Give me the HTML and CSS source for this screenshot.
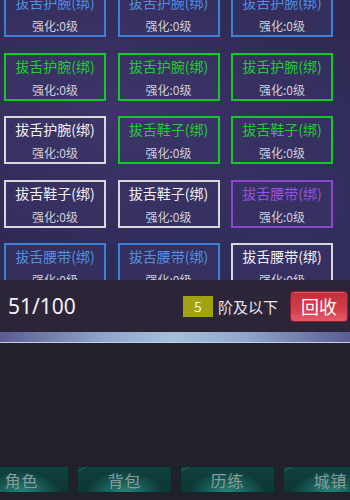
FILE: index.html
```html
<!DOCTYPE html>
<html>
<head>
<meta charset="utf-8">
<link rel="stylesheet" href="styles.css">
</head>
<body>
<div class="app">
  <div class="bag">
    <div class="grid">
      <div class="card blue"><div class="name">拔舌护腕(绑)</div><div class="lv">强化:0级</div></div>
      <div class="card blue"><div class="name">拔舌护腕(绑)</div><div class="lv">强化:0级</div></div>
      <div class="card blue"><div class="name">拔舌护腕(绑)</div><div class="lv">强化:0级</div></div>
      <div class="card green"><div class="name">拔舌护腕(绑)</div><div class="lv">强化:0级</div></div>
      <div class="card green"><div class="name">拔舌护腕(绑)</div><div class="lv">强化:0级</div></div>
      <div class="card green"><div class="name">拔舌护腕(绑)</div><div class="lv">强化:0级</div></div>
      <div class="card white"><div class="name">拔舌护腕(绑)</div><div class="lv">强化:0级</div></div>
      <div class="card green"><div class="name">拔舌鞋子(绑)</div><div class="lv">强化:0级</div></div>
      <div class="card green"><div class="name">拔舌鞋子(绑)</div><div class="lv">强化:0级</div></div>
      <div class="card white"><div class="name">拔舌鞋子(绑)</div><div class="lv">强化:0级</div></div>
      <div class="card white"><div class="name">拔舌鞋子(绑)</div><div class="lv">强化:0级</div></div>
      <div class="card purple"><div class="name">拔舌腰带(绑)</div><div class="lv">强化:0级</div></div>
      <div class="card blue"><div class="name">拔舌腰带(绑)</div><div class="lv">强化:0级</div></div>
      <div class="card blue"><div class="name">拔舌腰带(绑)</div><div class="lv">强化:0级</div></div>
      <div class="card white"><div class="name">拔舌腰带(绑)</div><div class="lv">强化:0级</div></div>
    </div>
  </div>
  <div class="panel">
    <div class="count">51/100</div>
    <div class="filter">
      <span class="tier">5</span>
      <span class="tier-label">阶及以下</span>
      <button class="recycle">回收</button>
    </div>
  </div>
  <div class="band"></div>
  <div class="empty"></div>
  <nav class="nav">
    <div class="tab"><span>角色</span></div>
    <div class="tab"><span>背包</span></div>
    <div class="tab"><span>历练</span></div>
    <div class="tab"><span>城镇</span></div>
  </nav>
</div>
</body>
</html>
```
FILE: styles.css
```css
* { box-sizing: border-box; margin: 0; padding: 0; }
html, body { width: 350px; height: 500px; overflow: hidden; background: #222129; }
body { font-family: "Noto Sans CJK SC", "Noto Sans", sans-serif; }
.app { width: 350px; height: 500px; display: flex; flex-direction: column; }

.bag {
  height: 280px;
  overflow: hidden;
  background:
    radial-gradient(ellipse at 30% 40%, rgba(90, 70, 140, 0.35), transparent 60%),
    radial-gradient(ellipse at 80% 70%, rgba(60, 60, 120, 0.3), transparent 60%),
    #2f2a55;
}
.grid {
  margin-top: -11px;
  padding-left: 4px;
  display: grid;
  grid-template-columns: repeat(3, 102px);
  column-gap: 11.5px;
  row-gap: 15.5px;
}
.card {
  height: 48px;
  border: 2px solid #d8d8e0;
  background: rgba(60, 54, 105, 0.45);
  display: flex;
  flex-direction: column;
  align-items: center;
  padding-top: 1px;
}
.name { font-size: 14px; line-height: 20px; color: #f0f0f2; }
.lv { font-size: 12px; line-height: 18px; margin-top: 5px; color: #cfcfd8; }
.card.blue { border-color: #3f7fd6; }
.card.blue .name { color: #4f8fe2; }
.card.green { border-color: #14c82a; }
.card.green .name { color: #20cc30; }
.card.purple { border-color: #8f45d0; }
.card.purple .name { color: #9a50dc; }

.panel {
  height: 52px;
  background: #2c2538;
  display: flex;
  align-items: center;
  justify-content: space-between;
  padding: 0 2px 0 8px;
}
.count { font-family: "Noto Sans", sans-serif; font-size: 21px; color: #f2f0f4; }
.filter { display: flex; align-items: center; }
.tier {
  width: 30px; height: 21px;
  background: #a2a312;
  color: #f4f4e0;
  font-size: 14px;
  display: flex; align-items: center; justify-content: center;
}
.tier-label { font-size: 15px; color: #e8e6ec; margin-left: 5px; margin-right: 12px; }
.recycle {
  width: 58px; height: 31px;
  border: 1px solid #8a2030;
  border-radius: 4px;
  background: linear-gradient(#c2303c, #d23e4a 60%, #e85a68);
  color: #fff;
  font-family: "Noto Sans CJK SC", sans-serif;
  font-size: 18px;
  box-shadow: inset 0 1px 0 rgba(255,255,255,0.2);
}

.band {
  height: 11px;
  background: linear-gradient(90deg, #5c5c92, #8ea6cc 30%, #a4c0dc 50%, #8ea6cc 70%, #5c5c92);
  border-bottom: 1px solid #c8d0e8;
}
.empty { flex: 1; background: #222129; }
.nav {
  height: 34px;
  display: flex;
  gap: 8px;
  margin-left: -26px;
  padding-bottom: 7px;
}
.tab {
  flex: 0 0 95px;
  height: 27px;
  border: 1px solid #0c2a2a;
  background:
    linear-gradient(155deg, transparent 10%, rgba(255,255,255,0.25) 11%, transparent 13%) no-repeat 0 0 / 30px 20px,
    radial-gradient(ellipse at 50% 110%, #2a8a80 0%, transparent 60%),
    linear-gradient(#0f403e, #0c3634);
  display: flex; align-items: center; justify-content: center;
}
.tab span { font-size: 16px; color: #8a9c9a; letter-spacing: 1px; }
```
